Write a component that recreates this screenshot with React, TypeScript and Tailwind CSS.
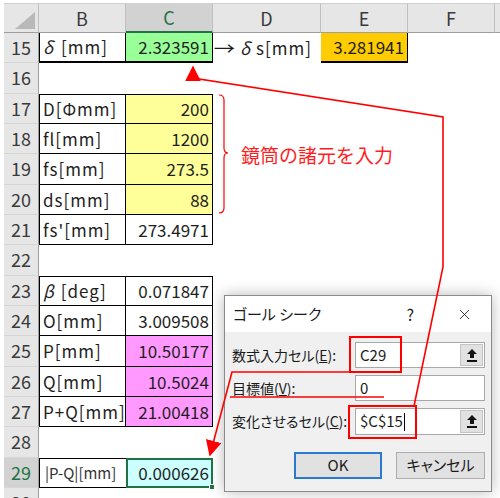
import { X } from 'lucide-react'
import type { ReactNode } from 'react'

const cols = ['B', 'C', 'D', 'E', 'F']

type DataRow = {
  n: number
  label: ReactNode
  value: string
  fill?: string
}

const specRows: DataRow[] = [
  { n: 17, label: 'D[Φmm]', value: '200', fill: 'bg-[#ffff99]' },
  { n: 18, label: 'fl[mm]', value: '1200', fill: 'bg-[#ffff99]' },
  { n: 19, label: 'fs[mm]', value: '273.5', fill: 'bg-[#ffff99]' },
  { n: 20, label: 'ds[mm]', value: '88', fill: 'bg-[#ffff99]' },
  { n: 21, label: "fs'[mm]", value: '273.4971' },
]

const calcRows: DataRow[] = [
  {
    n: 23,
    label: (
      <>
        <i className="mr-[6px]">β</i>[deg]
      </>
    ),
    value: '0.071847',
  },
  { n: 24, label: 'O[mm]', value: '3.009508' },
  { n: 25, label: 'P[mm]', value: '10.50177', fill: 'bg-[#ff99ff]' },
  { n: 26, label: 'Q[mm]', value: '10.5024', fill: 'bg-[#ff99ff]' },
  { n: 27, label: 'P+Q[mm]', value: '21.00418', fill: 'bg-[#ff99ff]' },
]

function RowHead({ n, active }: { n: number; active?: boolean }) {
  return (
    <div
      className={`flex items-center justify-center border-b border-r border-b-[#d6d6d6] border-r-[#9e9e9e] text-[18px] ${
        active ? 'bg-[#d2d2d2] text-[#217346]' : 'bg-[#e6e6e6] text-[#3a3a3a]'
      }`}
    >
      {n}
    </div>
  )
}

function Cell({ children, className = '' }: { children?: ReactNode; className?: string }) {
  return (
    <div className={`flex items-center overflow-hidden whitespace-nowrap border-black px-[3px] text-[17px] text-[#1e1e1e] ${className}`}>
      {children}
    </div>
  )
}

function Block({ rows }: { rows: DataRow[] }) {
  return (
    <>
      {rows.map((row, i) => (
        <div key={row.n} className="contents">
          <RowHead n={row.n} />
          <Cell className={`border-b border-l border-r tracking-[1px] ${i === 0 ? 'border-t' : ''}`}>{row.label}</Cell>
          <Cell className={`justify-end border-b border-r ${i === 0 ? 'border-t' : ''} ${row.fill ?? ''}`}>{row.value}</Cell>
          <div className="col-span-4" />
        </div>
      ))}
    </>
  )
}

function EmptyRow({ n }: { n: number }) {
  return (
    <>
      <RowHead n={n} />
      <div className="col-span-6" />
    </>
  )
}

function RefButton() {
  return (
    <div className="my-px mr-px flex w-[23px] items-center justify-center border border-[#c4c4c4] bg-[#e1e1e1]">
      <svg width="10" height="13" viewBox="0 0 10 13">
        <path d="M5 0 L10 5 L7 5 L7 9 L3 9 L3 5 L0 5 Z" fill="#111" />
        <rect x="0" y="11" width="10" height="2" fill="#111" />
      </svg>
    </div>
  )
}

function GoalSeekDialog() {
  return (
    <div className="absolute left-[224px] top-[295px] flex h-[197px] w-[268px] flex-col border border-[#8a8a8a] bg-[#f0f0f0] text-[14px] text-[#1a1a1a] shadow-[0_0_14px_rgba(0,0,0,0.28)] [font-feature-settings:'palt']">
      <div className="flex h-[36px] items-center bg-white pl-[8px] pr-[18px]">
        <span className="text-[15px]">ゴール シーク</span>
        <span className="ml-auto mr-[42px] text-[16px]">?</span>
        <X size={17} strokeWidth={1.2} />
      </div>
      <div className="flex flex-col gap-[7px] pl-[7px] pr-[6px] pt-[10px]">
        <div className="flex items-center">
          <span className="w-[123px]">
            数式入力セル(<span className="underline">E</span>):
          </span>
          <div className="flex h-[26px] w-[130px] border border-[#a8a8a8] bg-white">
            <span className="flex flex-1 items-center pl-[4px] text-[15px]">C29</span>
            <RefButton />
          </div>
        </div>
        <div className="flex items-center">
          <span className="w-[123px]">
            目標値(<span className="underline">V</span>):
          </span>
          <div className="flex h-[26px] w-[130px] items-center border border-[#a8a8a8] bg-white pl-[4px] text-[15px]">0</div>
        </div>
        <div className="flex items-center">
          <span className="w-[123px]">
            変化させるセル(<span className="underline">C</span>):
          </span>
          <div className="flex h-[27px] w-[130px] border border-[#a8a8a8] bg-white">
            <span className="flex flex-1 items-center pl-[4px] text-[15px]">
              $C$15
              <span className="ml-px h-[18px] w-px bg-black" />
            </span>
            <RefButton />
          </div>
        </div>
      </div>
      <div className="mt-[17px] flex justify-end gap-[14px] pr-[6px]">
        <button className="h-[27px] w-[88px] border-2 border-[#2a7ad2] bg-[#e1e1e1] text-[15px]" type="button">
          OK
        </button>
        <button className="h-[27px] w-[89px] border border-[#adadad] bg-[#e1e1e1] text-[15px]" type="button">
          キャンセル
        </button>
      </div>
    </div>
  )
}

function Annotations() {
  return (
    <svg className="pointer-events-none absolute left-0 top-0" width="500" height="498" viewBox="0 0 500 498">
      <defs>
        <marker id="head" markerHeight="10" markerWidth="10" orient="auto-start-reverse" refX="9" refY="5" viewBox="0 0 10 10">
          <path d="M0 0 L10 5 L0 10 Z" fill="#ff0000" />
        </marker>
      </defs>
      <g fill="none" stroke="#ff0000" strokeWidth="1.6">
        <polyline markerStart="url(#head)" points="193,67 193,78 443,117 443,267 414,406" />
        <polyline markerEnd="url(#head)" points="350,372 232,372 210,455" />
        <line x1="230" x2="384" y1="397" y2="397" />
        <rect height="35" width="51" x="350" y="337" strokeWidth="2" />
        <rect height="32" width="67" x="349" y="406" strokeWidth="2" />
        <path d="M219 95 Q224 95 224 100 L224 148 Q224 153 228 153 Q224 153 224 158 L224 208 Q224 213 219 213" strokeWidth="1.2" />
      </g>
    </svg>
  )
}

export default function App() {
  return (
    <div className="relative h-[498px] w-[500px] overflow-hidden bg-white pl-[4px] pt-[3px] font-['Noto_Sans_CJK_JP','Noto_Sans',sans-serif]">
      <div className="grid grid-cols-[35px_87px_87px_108px_87px_87px_1fr] grid-rows-[30px_repeat(16,30.33px)]">
        {/* column headers */}
        <div className="flex items-end justify-end border-b border-r border-t border-b-[#9e9e9e] border-r-[#bfbfbf] border-t-[#d0d0d0] bg-[#e6e6e6] pb-[3px] pr-[3px]">
          <svg width="20" height="17" viewBox="0 0 20 17">
            <path d="M20 0 L20 17 L0 17 Z" fill="#b9b9b9" />
          </svg>
        </div>
        {cols.map((c) => (
          <div
            key={c}
            className={`flex items-center justify-center border-r border-t border-r-[#bfbfbf] border-t-[#d0d0d0] text-[18px] ${
              c === 'C'
                ? 'border-b-2 border-b-[#217346] bg-[#d2d2d2] text-[#217346]'
                : 'border-b border-b-[#9e9e9e] bg-[#e6e6e6] text-[#3a3a3a]'
            }`}
          >
            {c}
          </div>
        ))}
        <div className="border-b border-t border-b-[#9e9e9e] border-t-[#d0d0d0] bg-[#e6e6e6]" />

        {/* row 15 */}
        <RowHead n={15} />
        <Cell className="border-b-2 border-l border-r tracking-[1px]">
          <i className="mr-[7px]">δ</i>[mm]
        </Cell>
        <Cell className="justify-end border-b-2 border-r bg-[#99ff99]">2.323591</Cell>
        <Cell className="tracking-[1px]">
          <span className="scale-x-125">→</span>
          <i className="ml-[6px] mr-[5px]">δ</i>s[mm]
        </Cell>
        <Cell className="justify-end border-b-2 border-r bg-[#ffcc00]">3.281941</Cell>
        <div className="col-span-2" />

        <EmptyRow n={16} />
        <Block rows={specRows} />
        <EmptyRow n={22} />
        <Block rows={calcRows} />
        <EmptyRow n={28} />

        {/* row 29 */}
        <RowHead n={29} active />
        <Cell className="border-b border-l border-t pl-[5px]">
          <span className="text-[15px] text-[#333]">|P-Q|[mm]</span>
        </Cell>
        <div className="relative flex items-center justify-end border-2 border-[#217346] bg-[#ccffff] pr-[2px] text-[17px] text-[#1e1e1e]">
          0.000626
          <span className="absolute -bottom-[4px] -right-[4px] h-[6px] w-[6px] border border-white bg-[#217346]" />
        </div>
        <div className="col-span-4" />

        <EmptyRow n={30} />
      </div>

      <p className="absolute left-[241px] top-[142px] text-[19px] leading-[26px] text-[#ff1e1e]">鏡筒の諸元を入力</p>

      <GoalSeekDialog />
      <Annotations />
    </div>
  )
}
